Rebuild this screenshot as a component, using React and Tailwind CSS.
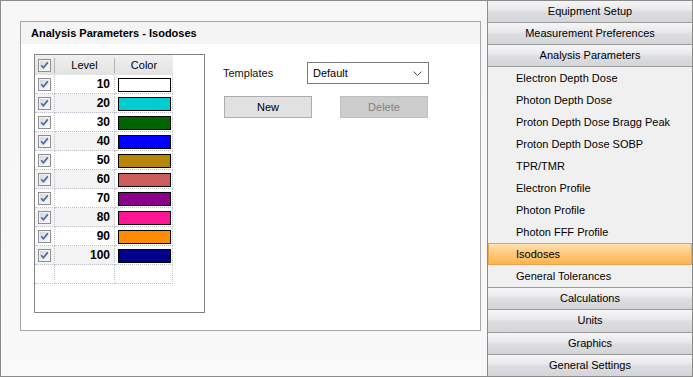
import React from "react";

const isodoses = [
  { level: 10, color: "#ffffff" },
  { level: 20, color: "#00ced1" },
  { level: 30, color: "#006400" },
  { level: 40, color: "#0000ff" },
  { level: 50, color: "#b8860b" },
  { level: 60, color: "#cd5c5c" },
  { level: 70, color: "#8b008b" },
  { level: 80, color: "#ff1493" },
  { level: 90, color: "#ff8c00" },
  { level: 100, color: "#00008b" },
];

const topSections = ["Equipment Setup", "Measurement Preferences", "Analysis Parameters"];
const bottomSections = ["Calculations", "Units", "Graphics", "General Settings"];
const items = [
  "Electron Depth Dose",
  "Photon Depth Dose",
  "Proton Depth Dose Bragg Peak",
  "Proton Depth Dose SOBP",
  "TPR/TMR",
  "Electron Profile",
  "Photon Profile",
  "Photon FFF Profile",
  "Isodoses",
  "General Tolerances",
];

const CheckBox = () => (
  <svg width="13" height="13" viewBox="0 0 13 13" className="block">
    <defs>
      <linearGradient id="cbfill" x1="0" y1="0" x2="1" y2="1">
        <stop offset="0" stopColor="#d6d8dc" />
        <stop offset="1" stopColor="#fbfbfb" />
      </linearGradient>
    </defs>
    <rect x="0.5" y="0.5" width="12" height="12" fill="#f4f4f4" stroke="#8e8f91" />
    <rect x="2" y="2" width="9" height="9" fill="url(#cbfill)" />
    <path d="M3.2 6.3 L5.4 8.8 L9.8 3.4" fill="none" stroke="#4a68a6" strokeWidth="1.7" />
  </svg>
);

const SectionHeader = ({ label, edge }) => (
  <div
    className={
      edge === "bottom"
        ? "h-[22px] flex-none flex items-center justify-center border-b border-[#9c9c9c] bg-[linear-gradient(to_bottom,#f6f6f7,#e9e9eb_40%,#dcdde0_55%,#d4d5d9)]"
        : "h-[22px] flex-1 flex items-center justify-center border-t border-[#9c9c9c] bg-[linear-gradient(to_bottom,#f6f6f7,#e9e9eb_40%,#dcdde0_55%,#d4d5d9)]"
    }
  >
    {label}
  </div>
);

const IsodoseGrid = () => (
  <div className="w-[171px] h-[259px] flex-none border border-[#828282] bg-white">
    {/* header */}
    <div className="flex h-[20px] w-[138px] items-center bg-[linear-gradient(to_bottom,#f0f0f0,#e2e2e2)]">
      <div className="w-[19px] flex justify-center">
        <CheckBox />
      </div>
      <div className="w-px h-[15px] bg-[#b5b5b5]" />
      <div className="w-[59px] text-center">Level</div>
      <div className="w-px h-[15px] bg-[#b5b5b5]" />
      <div className="w-[58px] text-center">Color</div>
    </div>

    {isodoses.map((row, i) => (
      <div key={row.level} className="flex h-[19px] w-[138px]">
        <div
          className={
            i % 2 === 1
              ? "w-[20px] flex items-center justify-center border-r border-b border-dotted border-[#c0c0ca] bg-[#f3f3f3]"
              : "w-[20px] flex items-center justify-center border-r border-b border-dotted border-[#c0c0ca]"
          }
        >
          <CheckBox />
        </div>
        <div
          className={
            i % 2 === 1
              ? "w-[60px] flex items-center justify-end pr-[4px] border-r border-b border-dotted border-[#c0c0ca] bg-[#f3f3f3] text-[12px] font-bold"
              : "w-[60px] flex items-center justify-end pr-[4px] border-r border-b border-dotted border-[#c0c0ca] text-[12px] font-bold"
          }
        >
          {row.level}
        </div>
        <div className="w-[58px] pl-[3px] pt-[3px] border-r border-b border-dotted border-[#c0c0ca]">
          <div className="w-[53px] h-[14px] border border-black" style={{ backgroundColor: row.color }} />
        </div>
      </div>
    ))}

    {/* empty new row */}
    <div className="flex h-[19px] w-[138px]">
      <div className="w-[20px] border-r border-b border-dotted border-[#c0c0ca]" />
      <div className="w-[60px] border-r border-b border-dotted border-[#c0c0ca]" />
      <div className="w-[58px] border-r border-b border-dotted border-[#c0c0ca]" />
    </div>
  </div>
);

export default function App() {
  return (
    <div className="w-[693px] h-[377px] flex border border-[#8a8a8a] bg-[#f8f8f8] text-[11px] text-black leading-none font-['Liberation_Sans',Arial,sans-serif] overflow-hidden">
      {/* Left content */}
      <div className="w-[486px] flex-none pt-[20px] pl-[19px] bg-[linear-gradient(to_bottom,#f6f6f6,#f9f9f9)]">
        <div className="w-[461px] h-[310px] border border-[#a6a6a6] bg-white flex flex-col">
          <div className="h-[22px] flex-none flex items-center pl-[10px] bg-[#f4f4f4] font-bold">
            Analysis Parameters - Isodoses
          </div>

          <div className="flex">
            <div className="ml-[13px] mt-[10px]">
              <IsodoseGrid />
            </div>

            <div className="ml-[18px] mt-[18px] flex flex-col">
              <div className="flex items-center">
                <span className="w-[84px] text-[#111]">Templates</span>
                <div className="w-[122px] h-[22px] border border-[#7a7a7a] bg-white flex items-center justify-between pl-[5px] pr-[6px]">
                  <span>Default</span>
                  <svg width="9" height="5" viewBox="0 0 9 5">
                    <path d="M0.5 0.5 L4.5 4.5 L8.5 0.5" fill="none" stroke="#505050" strokeWidth="1" />
                  </svg>
                </div>
              </div>

              <div className="flex mt-[12px] ml-[1px]">
                <button className="w-[88px] h-[22px] border border-[#adadad] bg-[#e1e1e1] flex items-center justify-center">
                  New
                </button>
                <button className="ml-[28px] w-[88px] h-[22px] border border-[#bfbfbf] bg-[#cccccc] text-[#838383] flex items-center justify-center">
                  Delete
                </button>
              </div>
            </div>
          </div>
        </div>
      </div>

      {/* Right navigation */}
      <div className="flex-1 flex flex-col border-l border-[#8c8c8c]">
        {topSections.map((s) => (
          <SectionHeader key={s} label={s} edge="bottom" />
        ))}

        <div className="flex-none bg-[#f0f0f0]">
          {items.map((it) =>
            it === "Isodoses" ? (
              <div
                key={it}
                className="h-[22px] flex items-center pl-[27px] border border-[#eba24e] bg-[linear-gradient(to_bottom,#ffe1b0,#ffc878_50%,#ffb450)]"
              >
                {it}
              </div>
            ) : (
              <div key={it} className="h-[22px] flex items-center pl-[28px]">
                {it}
              </div>
            )
          )}
        </div>

        {bottomSections.map((s) => (
          <SectionHeader key={s} label={s} edge="top" />
        ))}
      </div>
    </div>
  );
}
